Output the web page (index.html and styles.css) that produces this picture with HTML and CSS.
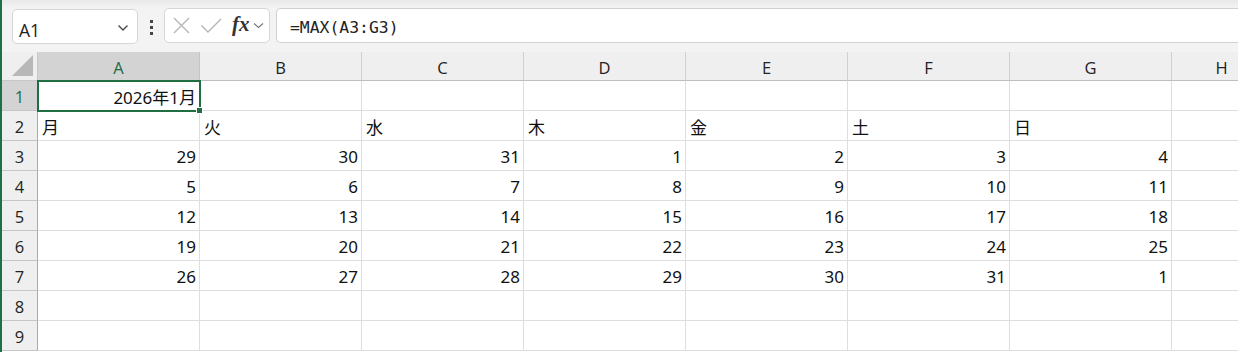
FILE: index.html
```html
<!DOCTYPE html>
<html lang="ja">
<head>
<meta charset="utf-8">
<link rel="stylesheet" href="styles.css">
</head>
<body>
<div class="app">
  <div class="toolbar">
    <div class="namebox">
      <span class="ref">A1</span>
      <svg class="chev" width="12" height="8" viewBox="0 0 12 8"><path d="M1.5 1.5 L6 6 L10.5 1.5" fill="none" stroke="#444" stroke-width="1.3"/></svg>
    </div>
    <div class="dots"><i></i><i></i><i></i></div>
    <div class="fxbox">
      <svg class="ico" width="19" height="19" viewBox="0 0 19 19"><path d="M2 2 L17 17 M17 2 L2 17" stroke="#b5b5b5" stroke-width="1.4" fill="none"/></svg>
      <svg class="ico" width="22" height="18" viewBox="0 0 22 18"><path d="M1.5 8.5 L8 15 L21 2" stroke="#b5b5b5" stroke-width="1.4" fill="none"/></svg>
      <span class="fx">fx</span>
      <svg class="chev2" width="11" height="7" viewBox="0 0 11 7"><path d="M1 1.5 L5.5 5.5 L10 1.5" fill="none" stroke="#777" stroke-width="1.1"/></svg>
    </div>
    <div class="formula">=MAX(A3:G3)</div>
  </div>
  <div class="sheet">
    <div class="corner"><span class="tri"></span></div>
    <div class="ch sel">A</div><div class="ch">B</div><div class="ch">C</div><div class="ch">D</div><div class="ch">E</div><div class="ch">F</div><div class="ch">G</div><div class="ch">H</div>

    <div class="rh sel">1</div>
    <div class="c r active">2026年1月<span class="handle"></span></div><div class="c"></div><div class="c"></div><div class="c"></div><div class="c"></div><div class="c"></div><div class="c"></div><div class="c"></div>

    <div class="rh">2</div>
    <div class="c">月</div><div class="c">火</div><div class="c">水</div><div class="c">木</div><div class="c">金</div><div class="c">土</div><div class="c">日</div><div class="c"></div>

    <div class="rh">3</div>
    <div class="c r">29</div><div class="c r">30</div><div class="c r">31</div><div class="c r">1</div><div class="c r">2</div><div class="c r">3</div><div class="c r">4</div><div class="c"></div>

    <div class="rh">4</div>
    <div class="c r">5</div><div class="c r">6</div><div class="c r">7</div><div class="c r">8</div><div class="c r">9</div><div class="c r">10</div><div class="c r">11</div><div class="c"></div>

    <div class="rh">5</div>
    <div class="c r">12</div><div class="c r">13</div><div class="c r">14</div><div class="c r">15</div><div class="c r">16</div><div class="c r">17</div><div class="c r">18</div><div class="c"></div>

    <div class="rh">6</div>
    <div class="c r">19</div><div class="c r">20</div><div class="c r">21</div><div class="c r">22</div><div class="c r">23</div><div class="c r">24</div><div class="c r">25</div><div class="c"></div>

    <div class="rh">7</div>
    <div class="c r">26</div><div class="c r">27</div><div class="c r">28</div><div class="c r">29</div><div class="c r">30</div><div class="c r">31</div><div class="c r">1</div><div class="c"></div>

    <div class="rh">8</div>
    <div class="c"></div><div class="c"></div><div class="c"></div><div class="c"></div><div class="c"></div><div class="c"></div><div class="c"></div><div class="c"></div>

    <div class="rh">9</div>
    <div class="c"></div><div class="c"></div><div class="c"></div><div class="c"></div><div class="c"></div><div class="c"></div><div class="c"></div><div class="c"></div>
  </div>
</div>
</body>
</html>
```
FILE: styles.css
```css
* { box-sizing: border-box; }
html, body { margin: 0; padding: 0; background: #fff; }
body { width: 1238px; height: 352px; overflow: hidden; }
.app {
  height: 352px;
  border-left: 2px solid #1e7145;
  font-family: "Noto Sans", "Noto Sans CJK JP", sans-serif;
}
.toolbar {
  height: 52px;
  background: linear-gradient(#e9e9e9 0, #f3f3f3 8px, #f3f3f3 100%);
  display: flex;
  align-items: flex-start;
  padding: 8px 0 0 10px;
}
.namebox {
  width: 126px;
  height: 35px;
  margin-top: 1px;
  background: #fff;
  border: 1px solid #d6d6d6;
  border-radius: 5px;
  display: flex;
  align-items: center;
  justify-content: space-between;
  padding: 0 8px 0 6px;
}
.ref { font-family: "Open Sans", "Noto Sans", sans-serif; font-size: 17.5px; color: #222; padding-top: 6px; }
.chev { margin-top: 2px; }
.dots {
  width: 26px;
  display: flex;
  flex-direction: column;
  align-items: center;
  gap: 3px;
  padding-top: 12px;
}
.dots i { display: block; width: 3px; height: 3px; background: #444; }
.fxbox {
  width: 106px;
  height: 35px;
  background: #fff;
  border: 1px solid #d6d6d6;
  border-radius: 5px;
  display: flex;
  align-items: center;
  padding: 0 2px 0 7px;
  gap: 9px;
}
.fx {
  font-family: "Liberation Serif", "DejaVu Serif", serif;
  font-style: italic;
  font-weight: bold;
  font-size: 21px;
  color: #333;
  margin-left: 1px;
  margin-top: -3px;
}
.chev2 { margin-left: -6px; }
.formula {
  flex: 1;
  margin-left: 6px;
  height: 35px;
  background: #fff;
  border: 1px solid #d0d0d0;
  border-right: 0;
  border-radius: 5px 0 0 5px;
  font-family: "DejaVu Sans Mono", "Liberation Mono", monospace;
  font-size: 16.4px;
  color: #222;
  padding: 9px 0 0 13px;
}
.sheet {
  display: grid;
  grid-template-columns: 36px repeat(7, 162px) 100px;
  grid-template-rows: 29px repeat(9, 30px);
  background: #f0f0f0;
}
.corner {
  background: #efefef;
  border-right: 1px solid #c8c8c8;
  border-bottom: 1px solid #c8c8c8;
  position: relative;
}
.tri {
  position: absolute;
  right: 4px;
  bottom: 4px;
  width: 0; height: 0;
  border-left: 21px solid transparent;
  border-bottom: 21px solid #b8b8b8;
}
.ch {
  background: #efefef;
  border-right: 1px solid #d0d0d0;
  border-bottom: 1px solid #bdbdbd;
  font-family: "Open Sans", "Noto Sans", sans-serif;
  font-size: 16.5px;
  color: #222;
  display: flex;
  align-items: center;
  justify-content: center;
  padding-top: 2px;
}
.ch:nth-child(2) { border-right-color: #c4c4c4; }
.ch.sel { background: #d3d3d3; color: #1c6b40; }
.rh {
  background: #efefef;
  border-right: 1px solid #aaa;
  border-bottom: 1px solid #c6c6c6;
  font-family: "Open Sans", "Noto Sans", sans-serif;
  font-size: 16.5px;
  color: #222;
  display: flex;
  align-items: center;
  justify-content: center;
  padding-top: 2px;
}
.rh.sel { background: #d3d3d3; color: #1c6b40; }
.c {
  background: #fff;
  border-right: 1px solid #dedede;
  border-bottom: 1px solid #dedede;
  font-size: 17px;
  color: #111;
  display: flex;
  align-items: center;
  padding: 2px 3px 0 4px;
  white-space: nowrap;
}
.c.r { justify-content: flex-end; }
.c.active {
  position: relative;
  outline: 2px solid #1e6e42;
  outline-offset: -1px;
  z-index: 1;
}
.handle {
  position: absolute;
  right: -4px;
  bottom: -4px;
  width: 7px;
  height: 7px;
  background: #1e6e42;
  border: 1px solid #fff;
}
```
